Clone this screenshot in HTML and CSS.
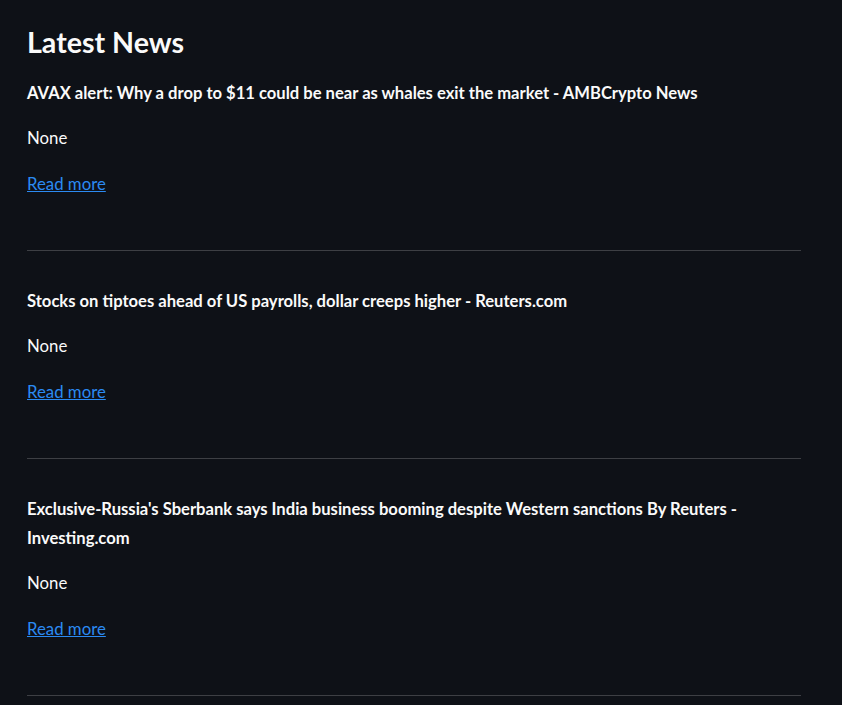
FILE: index.html
```html
<!DOCTYPE html>
<html lang="en">
<head>
<meta charset="utf-8">
<title>Latest News</title>
<link rel="stylesheet" href="styles.css">
</head>
<body>
<main class="page">
  <h1 class="page-title">Latest News</h1>
  <article class="news-item">
    <p class="news-title">AVAX alert: Why a drop to $11 could be near as whales exit the market - AMBCrypto News</p>
    <p class="news-desc">None</p>
    <p class="news-link"><a href="#">Read more</a></p>
    <hr class="divider">
  </article>
  <article class="news-item">
    <p class="news-title">Stocks on tiptoes ahead of US payrolls, dollar creeps higher - Reuters.com</p>
    <p class="news-desc">None</p>
    <p class="news-link"><a href="#">Read more</a></p>
    <hr class="divider">
  </article>
  <article class="news-item">
    <p class="news-title">Exclusive-Russia's Sberbank says India business booming despite Western sanctions By Reuters - Investing.com</p>
    <p class="news-desc">None</p>
    <p class="news-link"><a href="#">Read more</a></p>
    <hr class="divider">
  </article>
</main>
</body>
</html>
```
FILE: styles.css
```css
html, body {
  margin: 0;
  padding: 0;
  background: #0e1117;
}
body {
  font-family: Lato, "Noto Sans", sans-serif;
  color: #fafafa;
  font-size: 16.8px;
}
.page {
  width: 774px;
  padding: 22px 0 0 27px;
}
.page-title {
  margin: 0;
  font-size: 28.6px;
  font-weight: 700;
  line-height: 40px;
}
.news-item {
  display: flex;
  flex-direction: column;
}
.news-item:first-of-type {
  margin-top: 16.5px;
}
.news-title {
  margin: 0;
  font-size: 16.6px;
  font-weight: 700;
  line-height: 29px;
}
.news-desc {
  margin: 17.4px 0 0;
  line-height: 26px;
}
.news-link {
  margin: 20px 0 0;
  line-height: 26px;
}
.news-link a {
  color: #2b8af2;
  text-decoration: underline;
}
.divider {
  margin: 52.8px 0 36px;
  border: 0;
  height: 1px;
  background: rgba(250, 250, 250, 0.2);
}
```
